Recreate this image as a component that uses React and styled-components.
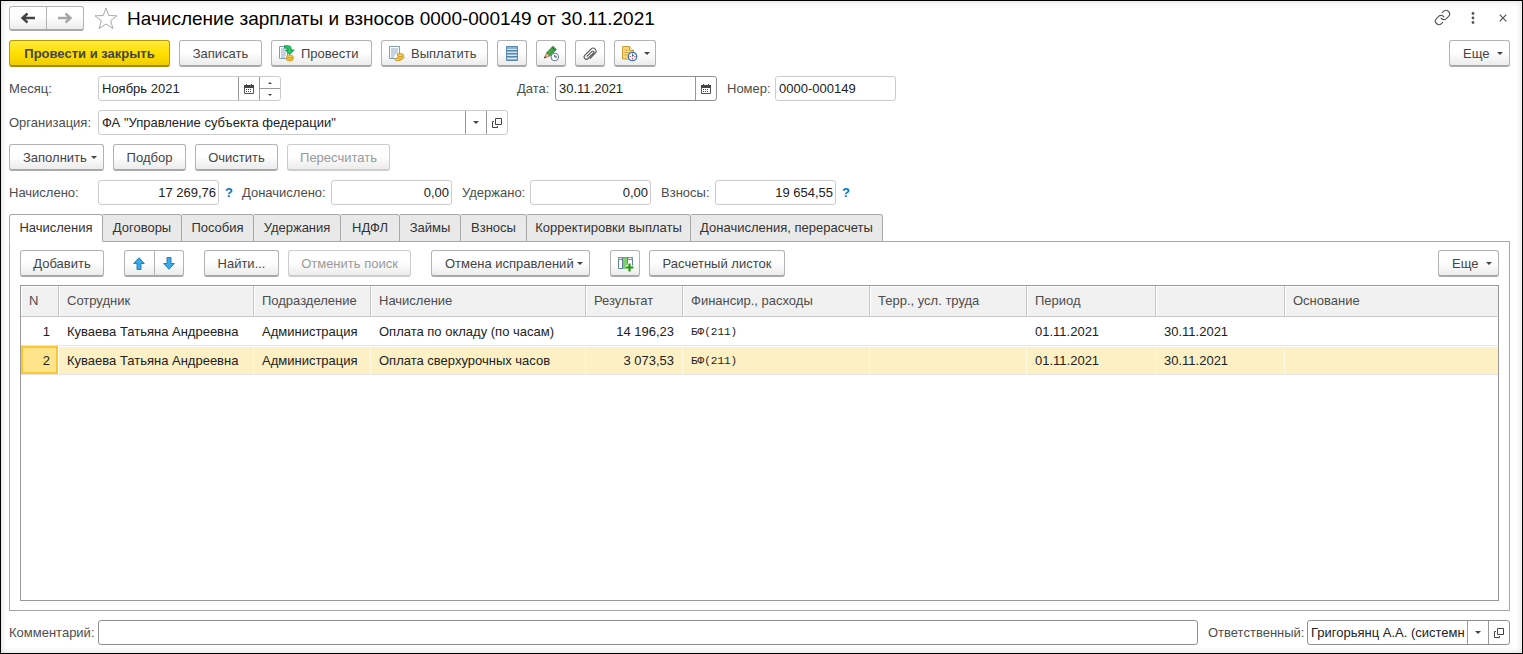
import React from "react";
import styled, { createGlobalStyle, css } from "styled-components";
import { Link as ChainIcon } from "lucide-react";

const GlobalStyle = createGlobalStyle`
  *, *::before, *::after { box-sizing: border-box; }
  body { margin: 0; background: #fff; }
  body, button, input, select {
    font-family: "Liberation Sans", Arial, sans-serif;
    font-size: 13px;
    line-height: 16px;
  }
  button > svg { flex: none; }
`;

const Page = styled.main`
  display: flex;
  flex-direction: column;
  gap: 9px;
  min-height: 100vh;
  padding: 5px 12px 8px 8px;
  border: 1px solid #000;
  box-shadow: inset 0 0 6px rgba(0, 0, 0, 0.16);
  color: #333;
`;

const TitleBar = styled.header`
  display: flex;
  align-items: center;
  gap: 10px;
  height: 25px;
`;

const Title = styled.h1`
  flex: 1;
  margin: 0;
  font-size: 19px;
  line-height: 24px;
  font-weight: 400;
  color: #000;
  white-space: nowrap;
`;

const WindowTools = styled.div`
  display: flex;
  align-items: center;
  gap: 15px;
  padding-bottom: 2px;
`;

const BareButton = styled.button`
  display: flex;
  align-items: center;
  justify-content: center;
  width: ${(p) => p.$w || 15}px;
  height: 20px;
  padding: 0;
  border: 0;
  background: none;
  color: #555;
`;

const buttonFace = css`
  border: 1px solid #b3b3b3;
  border-bottom: 2px solid #a9a9a9;
  border-radius: 3px;
  background: linear-gradient(#fff 0%, #fff 45%, #ececec 100%);
`;

const Button = styled.button`
  ${buttonFace}
  display: flex;
  flex: none;
  align-items: center;
  justify-content: ${(p) => (p.$menu ? "space-between" : p.$icon ? "flex-start" : "center")};
  gap: ${(p) => (p.$menu ? 3 : 6)}px;
  width: ${(p) => p.$w}px;
  height: 27px;
  padding: ${(p) => (p.$menu ? "1px 6px 0 13px" : p.$icon ? "1px 0 0 6px" : "1px 0 0")};
  color: #444;
  white-space: nowrap;

  &:disabled {
    color: #999;
    border-color: #ccc;
  }
`;

const PrimaryButton = styled(Button)`
  border-color: #b79c00;
  border-bottom-color: #a38b00;
  background: linear-gradient(#ffea3d 0%, #ffe000 50%, #f0cd00 100%);
  color: #444;
  font-weight: 700;
`;

const ButtonPair = styled.div`
  ${buttonFace}
  display: flex;
  flex: none;
  width: ${(p) => p.$w}px;
  height: ${(p) => p.$h}px;
`;

const PairButton = styled.button`
  display: flex;
  flex: 1;
  align-items: center;
  justify-content: center;
  padding: 0;
  border: 0;
  background: none;

  & + & { border-left: 1px solid #b3b3b3; }
`;

const Toolbar = styled.div`
  display: flex;
  align-items: center;
  gap: 20px;
`;

const ButtonGroup = styled.div`
  display: flex;
  gap: 9px;
`;

const Spacer = styled.div`
  flex: 1;
`;

const FormRow = styled.div`
  display: flex;
  align-items: center;
  gap: 10px;
  height: 25px;
`;

const LeadColumn = styled.div`
  display: flex;
  width: 498px;
`;

const FieldGroup = styled.div`
  display: flex;
  align-items: center;
  gap: 6px;
  flex: ${(p) => (p.$grow ? "1" : "none")};
`;

const Label = styled.label`
  flex: none;
  width: ${(p) => p.$w}px;
  color: #4d4d4d;
  white-space: nowrap;
`;

const Field = styled.div`
  --line: ${(p) => (p.$strong ? "#8f8f8f" : "#ccc")};
  display: flex;
  flex: ${(p) => (p.$w ? "none" : "1")};
  width: ${(p) => (p.$w ? p.$w + "px" : "auto")};
  height: 25px;
  border: 1px solid var(--line);
  border-radius: 3px;
  background: #fff;
  overflow: hidden;
`;

const TextInput = styled.input`
  flex: 1;
  min-width: 0;
  padding: 0 2px 0 3px;
  border: 0;
  outline: 0;
  background: none;
  color: #222;
  text-align: ${(p) => (p.$number ? "right" : "left")};
`;

const FieldButton = styled.button`
  display: flex;
  flex: none;
  align-items: center;
  justify-content: center;
  width: 21px;
  padding: 0;
  border: 0;
  border-left: 1px solid #999;
  background: none;
`;

const Spinner = styled.div`
  display: flex;
  flex: none;
  flex-direction: column;
  width: 21px;
  border-left: 1px solid #999;
`;

const SpinButton = styled.button`
  display: flex;
  flex: 1;
  align-items: center;
  justify-content: center;
  padding: 0;
  border: 0;
  background: none;

  & + & { border-top: 1px solid #999; }
`;

const SelectBox = styled.div`
  display: grid;
  flex: 1;
  min-width: 0;

  & > * { grid-area: 1 / 1; }
`;

const Select = styled.select`
  appearance: none;
  width: 100%;
  min-width: 0;
  padding: 0 22px 0 3px;
  border: 0;
  outline: 0;
  background: none;
  color: #222;
`;

const SelectArrow = styled.span`
  display: flex;
  align-items: center;
  justify-content: center;
  justify-self: end;
  width: 21px;
  border-left: 1px solid #999;
  pointer-events: none;
`;

const Help = styled.button`
  width: 7px;
  padding: 0;
  border: 0;
  background: none;
  color: #0077c0;
  font-weight: 700;
`;

const Sheet = styled.section`
  display: flex;
  flex: 1;
  flex-direction: column;
`;

const Tabs = styled.div`
  position: relative;
  z-index: 1;
  display: flex;
`;

const Tab = styled.button`
  width: ${(p) => p.$w}px;
  height: 28px;
  padding: 0;
  border: 1px solid #a8a8a8;
  border-left-width: 0;
  border-radius: 0 3px 0 0;
  background: #e9e9e9;
  color: #333;
  white-space: nowrap;

  &:first-child {
    border-left-width: 1px;
    border-radius: 3px 3px 0 0;
  }

  &[aria-selected="true"] {
    background: #fff;
    border-bottom-color: #fff;
  }
`;

const TabPanel = styled.div`
  display: flex;
  flex: 1;
  flex-direction: column;
  gap: 8px;
  margin-top: -1px;
  padding: 8px 10px 9px;
  border: 1px solid #a8a8a8;
`;

const TableFrame = styled.div`
  flex: 1;
  min-height: 100px;
  border: 1px solid #999;
  overflow: hidden;
`;

const Table = styled.table`
  width: 100%;
  table-layout: fixed;
  border-collapse: separate;
  border-spacing: 0;
`;

const HeadCell = styled.th`
  height: 31px;
  padding: 0 8px;
  border-right: 1px solid #c6c6c6;
  border-bottom: 1px solid #c6c6c6;
  background: #f1f1f1;
  box-shadow: inset 1px 1px 0 #fff;
  color: #4d4d4d;
  font-weight: 400;
  text-align: left;
  white-space: nowrap;

  &:last-child { border-right-color: #f1f1f1; }
`;

const Cell = styled.td`
  height: 29px;
  padding: 2px 8px 0;
  border-right: 1px solid #fff;
  border-bottom: 1px solid #e4e4ea;
  color: #222;
  text-align: ${(p) => (p.$number ? "right" : "left")};
  white-space: nowrap;
`;

const CodeCell = styled(Cell)`
  font-family: "Liberation Mono", "Courier New", monospace;
  font-size: 11px;
`;

const Row = styled.tr`
  ${(p) =>
    p.$selected &&
    css`
      & > td {
        background: #fdf0c5;
        border-right-color: #fff8e2;
        box-shadow: inset 0 1px 0 #fff;
      }
      & > td:first-child {
        background: #ffe48c;
        border-right-color: #fff;
        box-shadow: inset 0 0 0 2px #fcc72b;
      }
      & > td:last-child { border-right: 0; }
    `}
`;

const Caret = () => (
  <svg width="6" height="3" viewBox="0 0 6 3" aria-hidden="true">
    <path d="M0 0h6L3 3z" fill="#444" />
  </svg>
);

const TinyCaret = ({ up }) => (
  <svg width="4" height="2" viewBox="0 0 4 2" aria-hidden="true">
    <path d={up ? "M0 2L2 0L4 2z" : "M0 0h4L2 2z"} fill="#444" />
  </svg>
);

const NavArrow = ({ forward }) => (
  <svg width="16" height="12" viewBox="0 0 16 12" aria-hidden="true">
    <path
      d={forward ? "M1 6h12M8.500 1.500L13.500 6L8.500 10.500" : "M15 6H3M7.500 1.500L2.500 6L7.500 10.500"}
      fill="none"
      stroke={forward ? "#a6a6a6" : "#444"}
      strokeWidth="2.400"
    />
  </svg>
);

const StarIcon = () => (
  <svg width="24" height="23" viewBox="0 0 24 23" aria-hidden="true">
    <path
      d="M12 1L14.800 8.500L23 8.800L16.600 13.700L18.900 21.500L12 17L5.100 21.500L7.400 13.700L1 8.800L9.200 8.500z"
      fill="#fff"
      stroke="#a8a8a8"
    />
  </svg>
);

const DotsIcon = () => (
  <svg width="4" height="12" viewBox="0 0 4 12" fill="#555" aria-hidden="true">
    <circle cx="2" cy="1.500" r="1.400" />
    <circle cx="2" cy="6" r="1.400" />
    <circle cx="2" cy="10.500" r="1.400" />
  </svg>
);

const CloseIcon = () => (
  <svg width="8" height="8" viewBox="0 0 8 8" aria-hidden="true">
    <path d="M.7.700l6.600 6.600M7.300.700L.7 7.300" stroke="#555" strokeWidth="1.200" />
  </svg>
);

const CalendarIcon = () => (
  <svg width="10" height="10" viewBox="0 0 10 10" aria-hidden="true">
    <path d="M.5 2h9v7.500h-9z" fill="#fff" stroke="#555" />
    <path d="M0 1h10v3H0zM2 0h1v2H2zM7 0h1v2H7z" fill="#444" />
    <path d="M2 5h1v1H2zM4 5h1v1H4zM6 5h1v1H6zM2 7h1v1H2zM4 7h1v1H4zM6 7h1v1H6z" fill="#444" />
  </svg>
);

const OpenIcon = () => (
  <svg width="10" height="10" viewBox="0 0 10 10" fill="none" stroke="#444" aria-hidden="true">
    <path d="M3.500.5h6v6h-6z" />
    <path d="M2 3.500H.5v6h5V8" />
  </svg>
);

const PostIcon = () => (
  <svg width="17" height="17" viewBox="0 0 17 17" aria-hidden="true">
    <path d="M1.500 1.500h8v12h-8z" fill="#fff" stroke="#7f9db9" />
    <path d="M3 4h4M3 6h4M3 8h5M3 10h5M3 12h4" stroke="#8aa7c2" />
    <path d="M6.500.7h3.500q3.300 0 3.300 3.300v1h2.900L11.700 9.700L7.200 5H10V4q0-.8-.8-.8H6.500z" fill="#27c768" stroke="#0b8c42" strokeWidth=".8" />
    <g fill="#f7cf4f" stroke="#c58a1c" strokeWidth=".7">
      <path d="M8.500 11.500v3.200c0 .8 1.500 1.300 3.300 1.300s3.300-.5 3.300-1.300v-3.200z" />
      <ellipse cx="11.800" cy="13.200" rx="3.300" ry="1.200" />
      <ellipse cx="11.800" cy="11.300" rx="3.300" ry="1.200" />
    </g>
  </svg>
);

const PayIcon = () => (
  <svg width="17" height="17" viewBox="0 0 17 17" aria-hidden="true">
    <path d="M1.500 1.500h10v12h-10z" fill="#fff" stroke="#7f9db9" />
    <path d="M3 4h7M3 6h7M3 8h7M3 10h4M3 12h3" stroke="#8aa7c2" />
    <g fill="#f7cf4f" stroke="#c58a1c" strokeWidth=".8">
      <ellipse cx="10" cy="14.300" rx="3.300" ry="1.500" />
      <ellipse cx="12.800" cy="12.500" rx="3.300" ry="1.500" />
      <ellipse cx="12.300" cy="10" rx="3.300" ry="1.500" />
    </g>
  </svg>
);

const ListIcon = () => (
  <svg width="12" height="15" viewBox="0 0 12 15" aria-hidden="true">
    <path d="M.5.500h11v14H.5z" fill="#8fb4d3" stroke="#5684aa" />
    <path d="M1 3.500h10M1 6.500h10M1 9.500h10M1 12.500h10" stroke="#d5e6f2" />
    <path d="M1 4.500h10M1 7.500h10M1 10.500h10" stroke="#5684aa" />
  </svg>
);

const PencilClockIcon = () => (
  <svg width="17" height="17" viewBox="0 0 17 17" aria-hidden="true">
    <path d="M3.500 8L10 1.200l3.300 3.300L6.800 11z" fill="#43a548" stroke="#28752e" strokeWidth=".8" />
    <path d="M9 2.300l3.200 3.200" stroke="#1f6326" />
    <path d="M3.500 8l3.300 3L1.300 13z" fill="#f0bd82" stroke="#8a5a35" strokeWidth=".6" />
    <path d="M1 13.200l2.300-.7-1.200-1.300z" fill="#222" />
    <circle cx="11.800" cy="12" r="3.800" fill="#fff" stroke="#5f7d95" />
    <path d="M11.800 9.800V12H14" fill="none" stroke="#345" />
  </svg>
);

const ClipIcon = () => (
  <svg width="14" height="14" viewBox="0 0 14 14" fill="none" stroke="#555" strokeWidth="1.100" strokeLinecap="round" aria-hidden="true">
    <path d="M4.200 9.200L9 4.400a1.100 1.100 0 0 1 1.600 1.600L5 11.500a2.200 2.200 0 0 1-3.200-3.100L8 2.100a2.900 2.900 0 0 1 4.200 4.100L7.200 11.400" />
  </svg>
);

const NoteClockIcon = () => (
  <svg width="17" height="17" viewBox="0 0 17 17" aria-hidden="true">
    <path d="M1.500 1.500h7l4 4v8.500h-11z" fill="#f7d774" stroke="#c99a37" />
    <path d="M8.500 1.500v4h4" fill="#fff2bd" stroke="#c99a37" />
    <path d="M3.500 5h3M3.500 7.500h5M3.500 10h3" stroke="#d5a94a" />
    <circle cx="11.500" cy="11.500" r="4.200" fill="#fff" stroke="#3e76b0" strokeWidth="1.300" />
    <path d="M11.500 8.500v3l1.800-1.800" fill="none" stroke="#3e76b0" />
    <path d="M11.500 13v1.300M8.600 11.500h1.200M13.200 11.500h1.200" stroke="#d33" />
  </svg>
);

const MoveArrow = ({ down }) => (
  <svg width="12" height="13" viewBox="0 0 12 13" aria-hidden="true">
    <path
      d={down ? "M4 .5h4v6h3.300L6 12.300L.7 6.500H4z" : "M4 12.500h4v-6h3.300L6 .7L.7 6.500H4z"}
      fill="#3aa9e8"
      stroke="#1b75ad"
      strokeWidth=".9"
    />
  </svg>
);

const AddColumnIcon = () => (
  <svg width="17" height="16" viewBox="0 0 17 16" aria-hidden="true">
    <path d="M1.500 1.500h14v11h-14z" fill="#fff" stroke="#5f8197" />
    <path d="M1 1h15v3H1z" fill="#7896a9" />
    <path d="M6 2h4v11H6z" fill="#7fcf72" />
    <path d="M2.500 2.500h2M11.500 2.500h3" stroke="#fff" />
    <path d="M5.500 1v12M10.500 1v12" stroke="#5f8197" />
    <path d="M12.500 7v8M8.500 11.500h8" stroke="#fff" strokeWidth="4" />
    <path d="M12.500 7.500v8M8.500 11.500h8" stroke="#25930f" strokeWidth="2.200" />
  </svg>
);

const tabs = [
  ["Начисления", 94],
  ["Договоры", 79],
  ["Пособия", 72],
  ["Удержания", 87],
  ["НДФЛ", 59],
  ["Займы", 61],
  ["Взносы", 66],
  ["Корректировки выплаты", 164],
  ["Доначисления, перерасчеты", 192],
];

const columns = [
  ["N", 38],
  ["Сотрудник", 195],
  ["Подразделение", 117],
  ["Начисление", 215],
  ["Результат", 97],
  ["Финансир., расходы", 187],
  ["Терр., усл. труда", 157],
  ["Период", 129],
  ["", 129],
  ["Основание", null],
];

const rows = [
  { n: 1, kind: "Оплата по окладу (по часам)", sum: "14\u00a0196,23" },
  { n: 2, kind: "Оплата сверхурочных часов", sum: "3\u00a0073,53", selected: true },
];

const totals = [
  { id: "accrued", label: "Начислено:", w: 83, value: "17\u00a0269,76", help: true },
  { id: "extra", label: "Доначислено:", w: 83, value: "0,00" },
  { id: "withheld", label: "Удержано:", w: 62, value: "0,00" },
  { id: "contrib", label: "Взносы:", w: 48, value: "19\u00a0654,55", help: true },
];

const LookupField = ({ id, value, w, strong }) => (
  <Field $w={w} $strong={strong}>
    <SelectBox>
      <Select id={id} defaultValue={value}>
        <option>{value}</option>
      </Select>
      <SelectArrow><Caret /></SelectArrow>
    </SelectBox>
    <FieldButton aria-label="Открыть"><OpenIcon /></FieldButton>
  </Field>
);

export default function App() {
  return (
    <Page>
      <GlobalStyle />
      <TitleBar>
        <ButtonPair $w={75} $h={25}>
          <PairButton aria-label="Назад"><NavArrow /></PairButton>
          <PairButton aria-label="Вперед"><NavArrow forward /></PairButton>
        </ButtonPair>
        <BareButton $w={23} aria-label="В избранное"><StarIcon /></BareButton>
        <Title>Начисление зарплаты и взносов 0000-000149 от 30.11.2021</Title>
        <WindowTools>
          <BareButton aria-label="Ссылка"><ChainIcon size={17} strokeWidth={1.6} /></BareButton>
          <BareButton aria-label="Меню"><DotsIcon /></BareButton>
          <BareButton aria-label="Закрыть"><CloseIcon /></BareButton>
        </WindowTools>
      </TitleBar>

      <Toolbar>
        <ButtonGroup>
          <PrimaryButton $w={161}>Провести и закрыть</PrimaryButton>
          <Button $w={83}>Записать</Button>
          <Button $w={101} $icon><PostIcon />Провести</Button>
          <Button $w={107} $icon><PayIcon />Выплатить</Button>
          <Button $w={30} aria-label="Список"><ListIcon /></Button>
          <Button $w={30} aria-label="История правок"><PencilClockIcon /></Button>
          <Button $w={30} aria-label="Файлы"><ClipIcon /></Button>
          <Button $w={42} aria-label="Напоминание"><NoteClockIcon /><Caret /></Button>
        </ButtonGroup>
        <Spacer />
        <Button $w={61} $menu>Еще<Caret /></Button>
      </Toolbar>

      <FormRow>
        <LeadColumn>
          <FieldGroup>
            <Label htmlFor="month" $w={83}>Месяц:</Label>
            <Field $w={183}>
              <TextInput id="month" defaultValue="Ноябрь 2021" />
              <FieldButton aria-label="Выбрать месяц"><CalendarIcon /></FieldButton>
              <Spinner>
                <SpinButton aria-label="Следующий месяц"><TinyCaret up /></SpinButton>
                <SpinButton aria-label="Предыдущий месяц"><TinyCaret /></SpinButton>
              </Spinner>
            </Field>
          </FieldGroup>
        </LeadColumn>
        <FieldGroup>
          <Label htmlFor="date" $w={32}>Дата:</Label>
          <Field $w={162} $strong>
            <TextInput id="date" defaultValue="30.11.2021" />
            <FieldButton aria-label="Выбрать дату"><CalendarIcon /></FieldButton>
          </Field>
        </FieldGroup>
        <FieldGroup>
          <Label htmlFor="number" $w={42}>Номер:</Label>
          <Field $w={121}>
            <TextInput id="number" defaultValue="0000-000149" />
          </Field>
        </FieldGroup>
      </FormRow>

      <FormRow>
        <FieldGroup>
          <Label htmlFor="org" $w={83}>Организация:</Label>
          <LookupField id="org" w={410} value={'ФА "Управление субъекта федерации"'} />
        </FieldGroup>
      </FormRow>

      <ButtonGroup>
        <Button $w={95} $menu>Заполнить<Caret /></Button>
        <Button $w={73}>Подбор</Button>
        <Button $w={83}>Очистить</Button>
        <Button $w={103} disabled>Пересчитать</Button>
      </ButtonGroup>

      <FormRow>
        {totals.map((t) => (
          <FieldGroup key={t.id}>
            <Label htmlFor={t.id} $w={t.w}>{t.label}</Label>
            <Field $w={121}>
              <TextInput id={t.id} $number defaultValue={t.value} />
            </Field>
            {t.help && <Help aria-label="Подсказка">?</Help>}
          </FieldGroup>
        ))}
      </FormRow>

      <Sheet>
        <Tabs role="tablist">
          {tabs.map(([name, w], i) => (
            <Tab key={name} role="tab" aria-selected={i === 0} $w={w}>{name}</Tab>
          ))}
        </Tabs>
        <TabPanel role="tabpanel">
          <Toolbar>
            <Button $w={84}>Добавить</Button>
            <ButtonPair $w={60} $h={27}>
              <PairButton aria-label="Вверх"><MoveArrow /></PairButton>
              <PairButton aria-label="Вниз"><MoveArrow down /></PairButton>
            </ButtonPair>
            <ButtonGroup>
              <Button $w={75}>Найти...</Button>
              <Button $w={123} disabled>Отменить поиск</Button>
            </ButtonGroup>
            <Button $w={159} $menu>Отмена исправлений<Caret /></Button>
            <ButtonGroup>
              <Button $w={30} aria-label="Добавить колонку"><AddColumnIcon /></Button>
              <Button $w={136}>Расчетный листок</Button>
            </ButtonGroup>
            <Spacer />
            <Button $w={61} $menu>Еще<Caret /></Button>
          </Toolbar>

          <TableFrame>
            <Table>
              <colgroup>
                {columns.map(([, w], i) => (
                  <col key={i} width={w || undefined} />
                ))}
              </colgroup>
              <thead>
                <tr>
                  {columns.map(([name], i) => (
                    <HeadCell key={i} scope="col">{name}</HeadCell>
                  ))}
                </tr>
              </thead>
              <tbody>
                {rows.map((r) => (
                  <Row key={r.n} $selected={r.selected}>
                    <Cell $number>{r.n}</Cell>
                    <Cell>Куваева Татьяна Андреевна</Cell>
                    <Cell>Администрация</Cell>
                    <Cell>{r.kind}</Cell>
                    <Cell $number>{r.sum}</Cell>
                    <CodeCell>БФ(211)</CodeCell>
                    <Cell />
                    <Cell>01.11.2021</Cell>
                    <Cell>30.11.2021</Cell>
                    <Cell />
                  </Row>
                ))}
              </tbody>
            </Table>
          </TableFrame>
        </TabPanel>
      </Sheet>

      <FormRow>
        <FieldGroup $grow>
          <Label htmlFor="comment" $w={83}>Комментарий:</Label>
          <Field $strong>
            <TextInput id="comment" />
          </Field>
        </FieldGroup>
        <FieldGroup>
          <Label htmlFor="owner" $w={93}>Ответственный:</Label>
          <LookupField id="owner" w={203} strong value="Григорьянц А.А. (системн" />
        </FieldGroup>
      </FormRow>
    </Page>
  );
}
